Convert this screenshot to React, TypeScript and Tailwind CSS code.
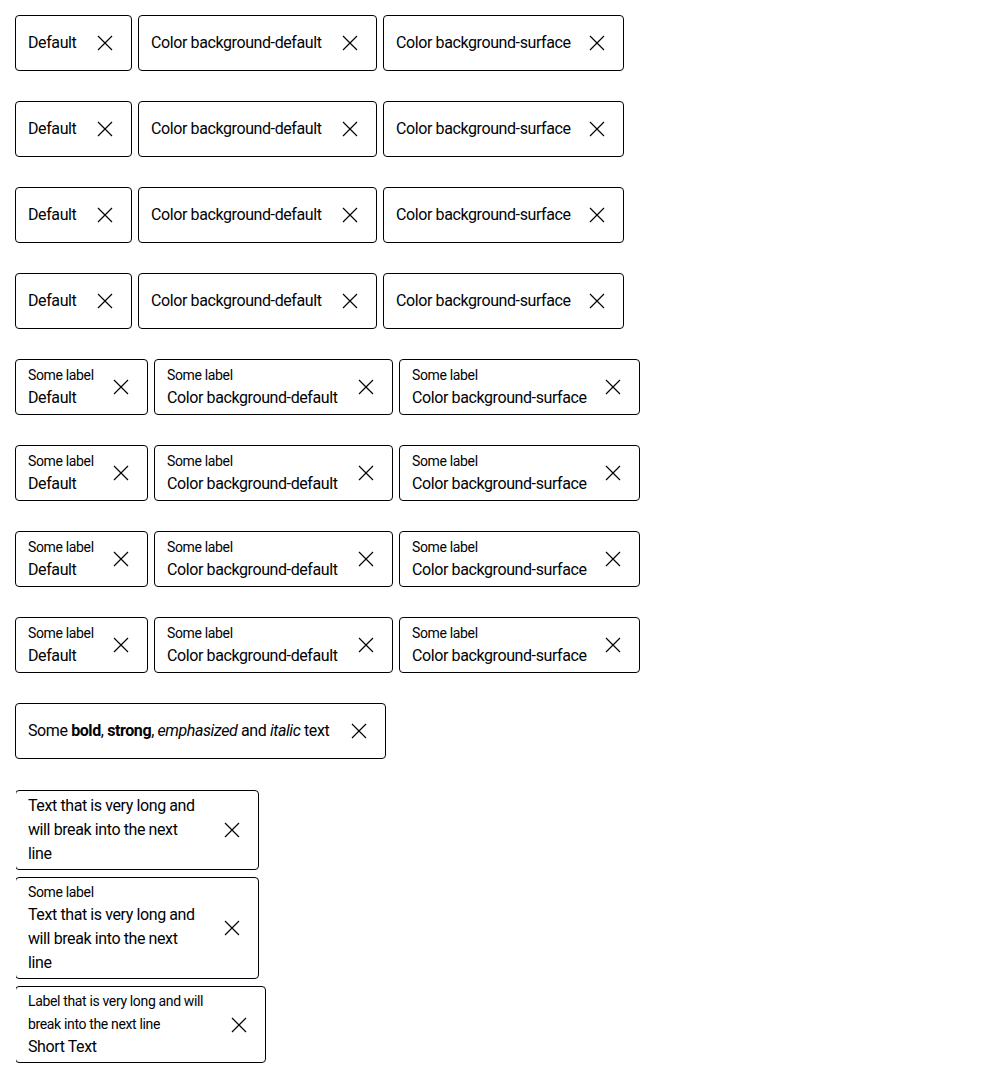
import React from "react";

const FONT = "font-['Roboto',_'Liberation_Sans',_sans-serif]";

function XIcon() {
  return (
    <svg width="24" height="24" viewBox="0 0 24 24" className="shrink-0" fill="none">
      <path d="M5 5 L19 19 M19 5 L5 19" stroke="#010205" strokeWidth="1.2" />
    </svg>
  );
}

function Tag({
  width,
  label,
  children,
}: {
  width: string;
  label?: React.ReactNode;
  children: React.ReactNode;
}) {
  return (
    <div
      className={`${width} shrink-0 min-h-[56px] border border-[#010205] rounded-[4px] bg-white flex items-center gap-4 pl-3 pr-[14px] py-[3px] text-[#010205]`}
    >
      <div className="flex-1 min-w-0 flex flex-col whitespace-nowrap">
        {label && <span className="text-[14px] leading-[23px] tracking-[-0.35px]">{label}</span>}
        <span className={`text-[16px] leading-[24px] tracking-[-0.4px] ${label ? "-mt-[1px]" : ""}`}>{children}</span>
      </div>
      <XIcon />
    </div>
  );
}

function SimpleRow() {
  return (
    <div className="flex gap-[6px]">
      <Tag width="w-[117px]">Default</Tag>
      <Tag width="w-[239px]">Color background-default</Tag>
      <Tag width="w-[241px]">Color background-surface</Tag>
    </div>
  );
}

function LabelRow() {
  return (
    <div className="flex gap-[6px]">
      <Tag width="w-[133px]" label="Some label">Default</Tag>
      <Tag width="w-[239px]" label="Some label">Color background-default</Tag>
      <Tag width="w-[241px]" label="Some label">Color background-surface</Tag>
    </div>
  );
}

export default function App() {
  return (
    <div className={`${FONT} bg-white min-h-[1086px] p-[15px] flex`}>
      <div className="flex flex-col">
        <div className="flex flex-col gap-[30px]">
          <SimpleRow />
          <SimpleRow />
          <SimpleRow />
          <SimpleRow />
          <LabelRow />
          <LabelRow />
          <LabelRow />
          <LabelRow />
          <div className="flex">
            <Tag width="w-[371px]">
              Some <b className="font-bold">bold</b>, <strong className="font-bold">strong</strong>,{" "}
              <em className="italic">emphasized</em> and <i className="italic">italic</i> text
            </Tag>
          </div>
        </div>
        <div className="mt-[31px] ml-[1px] overflow-hidden flex flex-col gap-[7px]">
          <div className="-ml-[1px]">
            <Tag width="w-[244px]">
              Text that is very long and
              <br />
              will break into the next
              <br />
              line
            </Tag>
          </div>
          <div className="-ml-[1px]">
            <Tag width="w-[244px]" label="Some label">
              Text that is very long and
              <br />
              will break into the next
              <br />
              line
            </Tag>
          </div>
          <div className="-ml-[1px]">
            <Tag
              width="w-[251px]"
              label={
                <>
                  Label that is very long and will
                  <br />
                  break into the next line
                </>
              }
            >
              Short Text
            </Tag>
          </div>
        </div>
      </div>
    </div>
  );
}
